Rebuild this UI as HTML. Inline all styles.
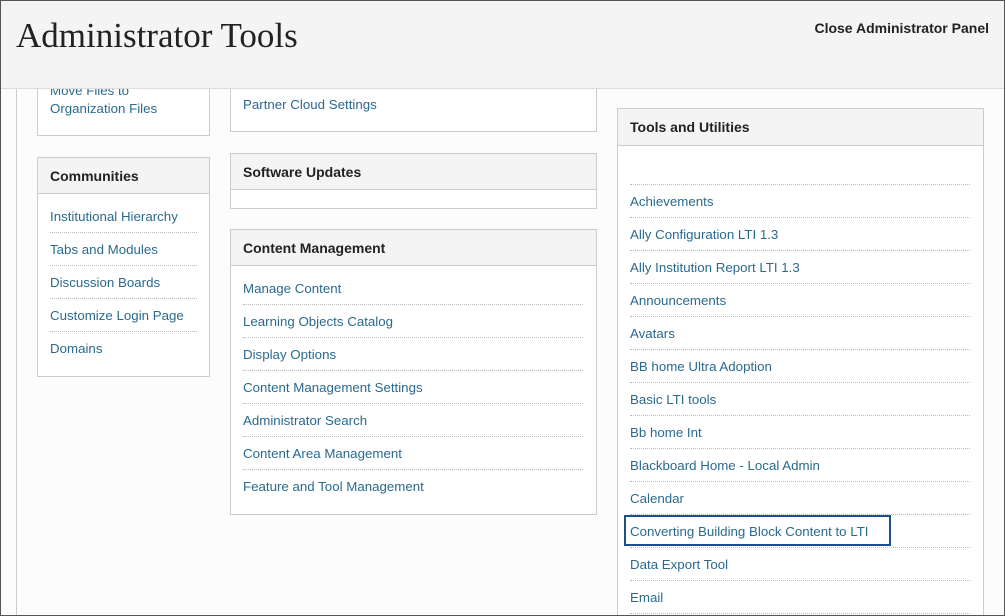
<!DOCTYPE html>
<html><head><style>
body{margin:0;width:1005px;height:616px;overflow:hidden;font-family:"Liberation Sans",sans-serif;}
.frame{position:absolute;left:0;top:0;width:1005px;height:616px;background:#fcfcfc;overflow:hidden}
.bord{position:absolute;left:0;top:0;width:1003px;height:614px;border:1px solid #555}
.hdr{position:absolute;left:0;top:0;width:1005px;height:88px;background:#f4f4f4;border-bottom:1px solid #ddd}
.title{position:absolute;left:16px;top:16px;font-family:"Liberation Serif",serif;font-size:35px;color:#222}
.close{position:absolute;right:16px;top:20px;font-size:14px;font-weight:bold;color:#222}
.vl{position:absolute;left:16px;top:89px;width:1px;height:530px;background:#ccc}
.box{position:absolute;border:1px solid #ccc;background:#fff}
.bh{background:#f4f4f4;border-bottom:1px solid #ccc;font-weight:bold;font-size:14px;color:#222;padding-left:12px;box-sizing:border-box}
.l{position:absolute;font-size:13.3px;color:#2a6a8f;white-space:nowrap;margin-top:1px}
.sep{position:absolute;height:0;border-top:1px dotted #bbb}
</style></head><body><div class="frame">
<div class="vl"></div>
<div class="box" style="left:37px;top:80px;width:171px;height:55px;border-top:none"></div>
<div class="l" style="left:50px;top:82px">Move Files to</div>
<div class="l" style="left:50px;top:100px">Organization Files</div>
<div class="box" style="left:230px;top:80px;width:365px;height:51px;border-top:none"></div>
<div class="l" style="left:243px;top:96px">Partner Cloud Settings</div>
<div class="hdr"><div class="title">Administrator Tools</div><div class="close">Close Administrator Panel</div></div>

<div class="box" style="left:37px;top:157px;width:171px;height:218px"><div class="bh" style="height:36px;line-height:36px">Communities</div></div>
<div class="box" style="left:230px;top:153px;width:365px;height:54px"><div class="bh" style="height:36px;line-height:36px">Software Updates</div></div>
<div class="box" style="left:230px;top:229px;width:365px;height:284px"><div class="bh" style="height:36px;line-height:36px">Content Management</div></div>
<div class="box" style="left:617px;top:108px;width:365px;height:520px"><div class="bh" style="height:37px;line-height:37px">Tools and Utilities</div></div>
<div class="sep" style="left:630px;top:184px;width:340px"></div>

<div class="l" style="left:50px;top:208px">Institutional Hierarchy</div>
<div class="sep" style="left:50px;top:232px;width:147px"></div>
<div class="l" style="left:50px;top:241px">Tabs and Modules</div>
<div class="sep" style="left:50px;top:265px;width:147px"></div>
<div class="l" style="left:50px;top:274px">Discussion Boards</div>
<div class="sep" style="left:50px;top:298px;width:147px"></div>
<div class="l" style="left:50px;top:307px">Customize Login Page</div>
<div class="sep" style="left:50px;top:331px;width:147px"></div>
<div class="l" style="left:50px;top:340px">Domains</div>

<div class="l" style="left:243px;top:280px">Manage Content</div>
<div class="sep" style="left:243px;top:304px;width:340px"></div>
<div class="l" style="left:243px;top:313px">Learning Objects Catalog</div>
<div class="sep" style="left:243px;top:337px;width:340px"></div>
<div class="l" style="left:243px;top:346px">Display Options</div>
<div class="sep" style="left:243px;top:370px;width:340px"></div>
<div class="l" style="left:243px;top:379px">Content Management Settings</div>
<div class="sep" style="left:243px;top:403px;width:340px"></div>
<div class="l" style="left:243px;top:412px">Administrator Search</div>
<div class="sep" style="left:243px;top:436px;width:340px"></div>
<div class="l" style="left:243px;top:445px">Content Area Management</div>
<div class="sep" style="left:243px;top:469px;width:340px"></div>
<div class="l" style="left:243px;top:478px">Feature and Tool Management</div>

<div class="l" style="left:630px;top:193px">Achievements</div>
<div class="sep" style="left:630px;top:217px;width:340px"></div>
<div class="l" style="left:630px;top:226px">Ally Configuration LTI 1.3</div>
<div class="sep" style="left:630px;top:250px;width:340px"></div>
<div class="l" style="left:630px;top:259px">Ally Institution Report LTI 1.3</div>
<div class="sep" style="left:630px;top:283px;width:340px"></div>
<div class="l" style="left:630px;top:292px">Announcements</div>
<div class="sep" style="left:630px;top:316px;width:340px"></div>
<div class="l" style="left:630px;top:325px">Avatars</div>
<div class="sep" style="left:630px;top:349px;width:340px"></div>
<div class="l" style="left:630px;top:358px">BB home Ultra Adoption</div>
<div class="sep" style="left:630px;top:382px;width:340px"></div>
<div class="l" style="left:630px;top:391px">Basic LTI tools</div>
<div class="sep" style="left:630px;top:415px;width:340px"></div>
<div class="l" style="left:630px;top:424px">Bb home Int</div>
<div class="sep" style="left:630px;top:448px;width:340px"></div>
<div class="l" style="left:630px;top:457px">Blackboard Home - Local Admin</div>
<div class="sep" style="left:630px;top:481px;width:340px"></div>
<div class="l" style="left:630px;top:490px">Calendar</div>
<div class="sep" style="left:630px;top:514px;width:340px"></div>
<div class="l" style="left:630px;top:523px">Converting Building Block Content to LTI</div>
<div style="position:absolute;left:624px;top:515px;width:263px;height:27px;border:2px solid #1f4e8c"></div>
<div class="sep" style="left:630px;top:547px;width:340px"></div>
<div class="l" style="left:630px;top:556px">Data Export Tool</div>
<div class="sep" style="left:630px;top:580px;width:340px"></div>
<div class="l" style="left:630px;top:589px">Email</div>
<div class="sep" style="left:630px;top:613px;width:340px"></div>
<div class="bord"></div>
</div></body></html>
